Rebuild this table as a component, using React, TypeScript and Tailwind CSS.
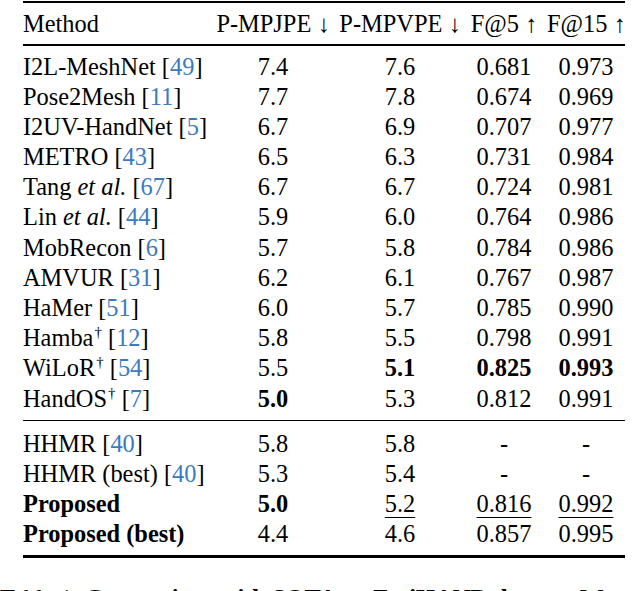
import type { ReactNode } from 'react';

type Row = {
  name: ReactNode;
  cells: ReactNode[];
};

const Cite = ({ n }: { n: number }) => (
  <>
    [<span className="text-[#3a7bc0]">{n}</span>]
  </>
);

// dagger marks methods trained with extra data
const Dag = () => <span className="relative -top-[9px] ml-[1px] text-[15px]">†</span>;

const B = ({ children }: { children: ReactNode }) => <span className="font-bold">{children}</span>;
const U = ({ children }: { children: ReactNode }) => (
  <span className="underline decoration-1 underline-offset-[5px]">{children}</span>
);

const topRows: Row[] = [
  { name: <>I2L-MeshNet <Cite n={49} /></>, cells: ['7.4', '7.6', '0.681', '0.973'] },
  { name: <>Pose2Mesh <Cite n={11} /></>, cells: ['7.7', '7.8', '0.674', '0.969'] },
  { name: <>I2UV-HandNet <Cite n={5} /></>, cells: ['6.7', '6.9', '0.707', '0.977'] },
  { name: <>METRO <Cite n={43} /></>, cells: ['6.5', '6.3', '0.731', '0.984'] },
  { name: <>Tang <i>et al.</i> <Cite n={67} /></>, cells: ['6.7', '6.7', '0.724', '0.981'] },
  { name: <>Lin <i>et al.</i> <Cite n={44} /></>, cells: ['5.9', '6.0', '0.764', '0.986'] },
  { name: <>MobRecon <Cite n={6} /></>, cells: ['5.7', '5.8', '0.784', '0.986'] },
  { name: <>AMVUR <Cite n={31} /></>, cells: ['6.2', '6.1', '0.767', '0.987'] },
  { name: <>HaMer <Cite n={51} /></>, cells: ['6.0', '5.7', '0.785', '0.990'] },
  { name: <>Hamba<Dag /> <Cite n={12} /></>, cells: ['5.8', '5.5', '0.798', '0.991'] },
  { name: <>WiLoR<Dag /> <Cite n={54} /></>, cells: ['5.5', <B>5.1</B>, <B>0.825</B>, <B>0.993</B>] },
  { name: <>HandOS<Dag /> <Cite n={7} /></>, cells: [<B>5.0</B>, '5.3', '0.812', '0.991'] },
];

const bottomRows: Row[] = [
  { name: <>HHMR <Cite n={40} /></>, cells: ['5.8', '5.8', '-', '-'] },
  { name: <>HHMR (best) <Cite n={40} /></>, cells: ['5.3', '5.4', '-', '-'] },
  { name: <B>Proposed</B>, cells: [<B>5.0</B>, <U>5.2</U>, <U>0.816</U>, <U>0.992</U>] },
  { name: <B>Proposed (best)</B>, cells: ['4.4', '4.6', '0.857', '0.995'] },
];

const cols = 'grid grid-cols-[190px_120px_134px_80px_78px]';

function TableRow({ row, h }: { row: Row; h: string }) {
  return (
    <div className={`${cols} ${h} leading-[30px]`}>
      <div className="whitespace-nowrap">{row.name}</div>
      {row.cells.map((c, i) => (
        <div key={i} className={`text-center whitespace-nowrap ${i === 2 ? 'pr-[6px]' : ''}`}>
          {c}
        </div>
      ))}
    </div>
  );
}

export default function App() {
  return (
    <div
      className="h-[591px] w-[640px] overflow-hidden bg-white text-[24.4px] text-black"
      style={{ fontFamily: '"Liberation Serif", "Times New Roman", serif' }}
    >
      <div className="ml-[23px] w-[602px] pt-[1px]">
        <div className="h-[2px] bg-black" />
        <div className={`${cols} mt-[6px] h-[30px] leading-[30px]`}>
          <div>Method</div>
          <div className="text-center whitespace-nowrap">P-MPJPE ↓</div>
          <div className="text-center whitespace-nowrap">P-MPVPE ↓</div>
          <div className="text-center whitespace-nowrap pr-[6px]">F@5 ↑</div>
          <div className="text-center whitespace-nowrap">F@15 ↑</div>
        </div>
        <div className="mt-[5px] h-[1.5px] bg-black" />
        <div className="mt-[6px]">
          {topRows.map((r, i) => (
            <TableRow key={i} row={r} h="h-[30.2px]" />
          ))}
        </div>
        <div className="mt-[6px] h-[1.5px] bg-black" />
        <div className="mt-[8px]">
          {bottomRows.map((r, i) => (
            <TableRow key={i} row={r} h="h-[30px]" />
          ))}
        </div>
        <div className="mt-[6px] h-[2.5px] bg-black" />
      </div>
      <div className="mt-[26px] whitespace-nowrap leading-[30px]">
        Table 1: <B>Comparison with SOTA on FreiHAND dataset.</B> We compare
      </div>
    </div>
  );
}
